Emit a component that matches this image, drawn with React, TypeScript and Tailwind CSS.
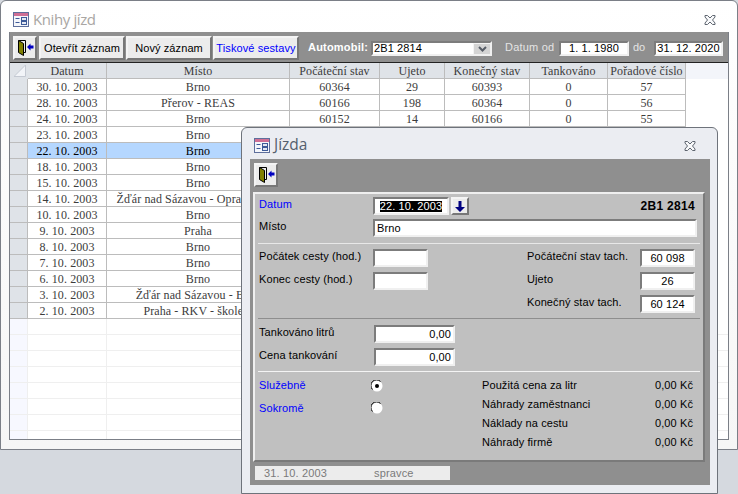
import React from "react";

const sans = "font-['Liberation_Sans',Arial,sans-serif]";
const serif = "font-['Liberation_Serif','Times_New_Roman',serif]";
const sunken = "border-2 border-t-[#7c7c7c] border-l-[#7c7c7c] border-r-[#f0f0f0] border-b-[#f0f0f0] bg-white";
const raised = "border-2 border-t-[#f4f4f4] border-l-[#f4f4f4] border-r-[#777777] border-b-[#777777] bg-[#ececec]";

const FormIcon = () => (
  <svg width="16" height="15" viewBox="0 0 16 15" className="shrink-0">
    <rect x="0.5" y="0.5" width="15" height="14" fill="#f4f6fb" stroke="#5e6f9c" />
    <rect x="1" y="1" width="14" height="3" fill="#cf6f95" />
    <rect x="2.5" y="6" width="4" height="1" fill="#3d5a98" />
    <rect x="2.5" y="10" width="4" height="1" fill="#3d5a98" />
    <rect x="8.5" y="5.5" width="5" height="3" fill="#e4e8f2" stroke="#3d5a98" strokeWidth="1" />
    <rect x="8.5" y="9.5" width="5" height="3" fill="#e4e8f2" stroke="#3d5a98" strokeWidth="1" />
  </svg>
);

const CloseIcon = () => (
  <svg width="12" height="10" viewBox="0 0 12 10">
    <path d="M1 .5h2.500L6 3l2.500-2.500H11v1.500L8.500 5 11 8v1.500H8.500L6 7 3.500 9.500H1V8l2.500-3L1 2z" fill="#f8f9fb" stroke="#5f6670" strokeWidth="1" />
  </svg>
);

const DoorIcon = () => (
  <svg width="20" height="20" viewBox="0 0 20 20">
    <path d="M3.500 2.500h7v12H8" fill="none" stroke="#000" />
    <path d="M3.500 2.500l5 3v12l-5-3z" fill="#808000" stroke="#000" />
    <path d="M12 9l3.500-3.500V7.500H18.500v3H15.500v2z" fill="#0000c0" />
  </svg>
);

const ExitButton = ({ cls }: { cls: string }) => (
  <div className={`${raised} w-[24px] h-[24px] flex items-center justify-center ${cls}`}>
    <DoorIcon />
  </div>
);

const ToolBtn = ({ label, blue }: { label: string; blue?: boolean }) => (
  <div className={`${raised} w-[86px] h-[24px] flex items-center justify-center text-[11px] tracking-[0.1px] whitespace-nowrap ${blue ? "text-[#0000ff]" : "text-black"}`}>
    {label}
  </div>
);

const widths = ["w-[79px]", "w-[183px]", "w-[90px]", "w-[65px]", "w-[85px]", "w-[78px]", "w-[78px]"];
const headers = ["Datum", "Místo", "Počáteční stav", "Ujeto", "Konečný stav", "Tankováno", "Pořadové číslo"];
const rows: string[][] = [
  ["30. 10. 2003", "Brno", "60364", "29", "60393", "0", "57"],
  ["28. 10. 2003", "Přerov - REAS", "60166", "198", "60364", "0", "56"],
  ["24. 10. 2003", "Brno", "60152", "14", "60166", "0", "55"],
  ["23. 10. 2003", "Brno", "60124", "28", "60152", "0", "54"],
  ["22. 10. 2003", "Brno", "60098", "26", "60124", "0", "53"],
  ["18. 10. 2003", "Brno", "", "", "", "", ""],
  ["15. 10. 2003", "Brno", "", "", "", "", ""],
  ["14. 10. 2003", "Žďár nad Sázavou - Oprava vozu", "", "", "", "", ""],
  ["10. 10. 2003", "Brno", "", "", "", "", ""],
  ["9. 10. 2003", "Praha", "", "", "", "", ""],
  ["8. 10. 2003", "Brno", "", "", "", "", ""],
  ["7. 10. 2003", "Brno", "", "", "", "", ""],
  ["6. 10. 2003", "Brno", "", "", "", "", ""],
  ["3. 10. 2003", "Žďár nad Sázavou - Brno", "", "", "", "", ""],
  ["2. 10. 2003", "Praha - RKV - školení", "", "", "", "", ""],
];

const Datasheet = () => (
  <div className={`${serif} text-[12px] tracking-[0.1px] text-[#3c3c3c] h-[377px] overflow-hidden bg-white`}>
    <div className="flex h-[16px] bg-[#f3f5fa]">
      <div className="w-[18px] bg-[#dfe3e8] border-r border-[#dfe3e8] relative">
        <svg width="12" height="12" viewBox="0 0 12 12" className="absolute left-[4px] top-[2px]">
          <path d="M0 11.500h11.500V0z" fill="#f2f4f8" stroke="#c4c9d2" strokeWidth="1" />
        </svg>
      </div>
      {headers.map((h, i) => (
        <div key={h} className={`${widths[i]} shrink-0 bg-[#dfe3e8] border-r border-b border-[#bcbcbc] flex items-center justify-center leading-none`}>
          {h}
        </div>
      ))}
    </div>
    {rows.map((r, n) => (
      <div key={n} className={`flex h-[16px] ${n === 4 ? "text-black" : ""}`}>
        <div className="w-[18px] shrink-0 bg-[#dfe3e8] border-r border-b border-[#bcbcbc]" />
        {r.map((c, i) => (
          <div
            key={i}
            className={`${widths[i]} shrink-0 border-r border-b border-[#bcbcbc] flex items-center justify-center whitespace-nowrap overflow-hidden leading-none pt-px ${n === 4 ? "bg-[#b5d7ff]" : ""}`}
          >
            {c}
          </div>
        ))}
      </div>
    ))}
    {Array.from({ length: 8 }).map((_, n) => (
      <div key={n} className="flex h-[16px]">
        <div className="w-[18px] shrink-0 bg-[#f7f8ff] border-r border-b border-[#efefef]" />
        {widths.map((w, i) => (
          <div key={i} className={`${w} shrink-0 border-r border-b border-[#efefef]`} />
        ))}
        <div className="flex-1 border-b border-[#efefef]" />
      </div>
    ))}
  </div>
);

const Field = ({ w, value, align }: { w: string; value?: string; align?: string }) => (
  <div className={`${sunken} ${w} h-[18px] flex items-center px-[2px] text-[11px] tracking-[0.1px] leading-none text-black ${align ?? ""}`}>
    {value}
  </div>
);

const Label = ({ children, blue, cls }: { children: React.ReactNode; blue?: boolean; cls?: string }) => (
  <div className={`text-[11px] tracking-[0.1px] leading-none whitespace-nowrap ${blue ? "text-[#0000ff]" : "text-black"} ${cls ?? ""}`}>{children}</div>
);

const Radio = ({ on }: { on?: boolean }) => (
  <svg width="12" height="12" viewBox="0 0 12 12">
    <circle cx="6" cy="6" r="5.500" fill="#fff" />
    <path d="M1.500 9.500A5.500 5.500 0 0 1 9.500 1.500" fill="none" stroke="#000" strokeWidth="1" />
    {on && <circle cx="6" cy="6" r="2" fill="#000" />}
  </svg>
);

const Money = ({ label, value }: { label: string; value: string }) => (
  <div className="flex h-[19px] items-center justify-between">
    <Label>{label}</Label>
    <Label>{value}</Label>
  </div>
);

const Dialog = () => (
  <div className="absolute left-[241px] top-[127px] w-[477px] h-[367px] rounded-t-[6px] border border-[#6e737b] bg-[#ebedf2] flex flex-col pl-[8px] pr-[7px]">
    <div className="h-[31px] flex items-center pl-[4px] pt-[3px] gap-[4px] relative shrink-0">
      <FormIcon />
      <span className="font-['Open_Sans',sans-serif] text-[15.5px] text-[#55606e]">Jízda</span>
      <div className="absolute right-[14px] top-[13px]"><CloseIcon /></div>
    </div>
    <div className="h-[326px] bg-[#8f8f8f] flex flex-col pt-[4px] pl-[4px] pr-[5px]">
      <ExitButton cls="" />
      <div className={`${sans} mt-[5px] -ml-[1px] h-[270px] bg-[#c0c0c0] border-2 border-t-[#efefef] border-l-[#efefef] border-r-[#7a7a7a] border-b-[#7a7a7a] flex flex-col pt-[3px]`}>
        <div className="flex h-[18px]">
          <Label blue cls="w-[118px] pl-[4px] pt-[2px] shrink-0">Datum</Label>
          <div className={`${sunken} w-[76px] h-[18px] flex items-center justify-center text-[11px] tracking-[0.1px] leading-none`}>
            <span className="bg-black text-white">22. 10. 2003</span>
          </div>
          <div className={`${raised} ml-[2px] w-[18px] h-[18px] flex items-center justify-center`}>
            <svg width="10" height="11" viewBox="0 0 10 11"><path d="M3.500 0h3v6H10L5 11 0 6h3.500z" fill="#000080" /></svg>
          </div>
          <div className="flex-1 text-right pr-[8px] pt-[3px] text-[12px] tracking-[0.3px] leading-none font-bold text-black">2B1 2814</div>
        </div>
        <div className="flex h-[18px] mt-[4px]">
          <Label cls="w-[118px] pl-[4px] pt-[2px] shrink-0">Místo</Label>
          <Field w="w-[324px]" value="Brno" />
        </div>
        <div className="h-px bg-[#e8e8e8] mt-[6px] mx-[3px]" />

        <div className="flex justify-between mt-[5px] h-[64px]">
          <div className="flex flex-col gap-[5px]">
            <div className="flex h-[18px]">
              <Label cls="w-[118px] pl-[4px] pt-[2px]">Počátek cesty (hod.)</Label>
              <Field w="w-[55px]" />
            </div>
            <div className="flex h-[18px]">
              <Label cls="w-[118px] pl-[4px] pt-[2px]">Konec cesty (hod.)</Label>
              <Field w="w-[55px]" />
            </div>
          </div>
          <div className="flex flex-col gap-[5px] pr-[8px]">
            {[["Počáteční stav tach.", "60 098"], ["Ujeto", "26"], ["Konečný stav tach.", "60 124"]].map(([l, v]) => (
              <div key={l} className="flex h-[18px]">
                <Label cls="w-[113px] pt-[2px]">{l}</Label>
                <Field w="w-[55px]" value={v} align="justify-center" />
              </div>
            ))}
          </div>
        </div>
        <div className="h-px bg-[#8e8e8e] mt-[5px] mx-[3px]" />

        <div className="flex flex-col gap-[5px] mt-[6px]">
          {[["Tankováno litrů", "0,00"], ["Cena tankování", "0,00"]].map(([l, v]) => (
            <div key={l} className="flex h-[18px]">
              <Label cls="w-[119px] pl-[4px] pt-[2px]">{l}</Label>
              <Field w="w-[81px]" value={v} align="justify-end" />
            </div>
          ))}
        </div>
        <div className="h-px bg-[#f4f4f4] mt-[5px] mx-[3px]" />

        <div className="flex mt-[8px]">
          <div className="w-[116px] pl-[4px] flex flex-col gap-[12px]">
            <Label blue>Služebně</Label>
            <Label blue>Sokromě</Label>
          </div>
          <div className="w-[111px] flex flex-col gap-[10px]">
            <Radio on />
            <Radio />
          </div>
          <div className="w-[211px] -mt-[4px] flex flex-col">
            <Money label="Použitá cena za litr" value="0,00 Kč" />
            <Money label="Náhrady zaměstnanci" value="0,00 Kč" />
            <Money label="Náklady na cestu" value="0,00 Kč" />
            <Money label="Náhrady firmě" value="0,00 Kč" />
          </div>
        </div>
      </div>
      <div className={`${sans} mt-[4px] h-[14px] w-[195px] ml-[1px] bg-[#ececec] flex items-center text-[11px] tracking-[0.15px] leading-none text-[#7a7a7a]`}>
        <span className="w-[119px] pl-[9px]">31. 10. 2003</span>
        <span>spravce</span>
      </div>
    </div>
  </div>
);

export default function App() {
  return (
    <div className="relative w-[738px] h-[494px] overflow-hidden bg-[#d5d9df]">
      <div className="w-[738px] h-[450px] rounded-t-[6px] border border-[#7b7f87] bg-gradient-to-b from-white to-[#f6f6f6] flex flex-col pl-[8px] pr-[8px]">
        <div className="h-[31px] flex items-center pl-[4px] pt-[5px] gap-[4px] relative shrink-0">
          <FormIcon />
          <span className="font-['Open_Sans',sans-serif] text-[15px] tracking-[-0.4px] text-[#a9a6a3]">Knihy jízd</span>
          <div className="absolute right-[13px] top-[14px]"><CloseIcon /></div>
        </div>
        <div className="flex flex-col border-x border-b border-[#7b7f87] h-[408px]">
          <div className={`${sans} h-[31px] bg-[#8f8f8f] border-b border-[#222222] flex items-center pl-[3px] shrink-0`}>
            <ExitButton cls="mt-[2px]" />
            <div className="flex ml-[2px] gap-px mt-[2px]">
              <ToolBtn label="Otevřít záznam" />
              <ToolBtn label="Nový záznam" />
              <ToolBtn label="Tiskové sestavy" blue />
            </div>
            <span className="ml-[9px] text-[11px] font-bold text-white tracking-[0.2px] w-[63px] whitespace-nowrap">Automobil:</span>
            <div className={`${sunken} w-[121px] h-[15px] mt-[3px] flex items-center pl-[1px] text-[11px] tracking-[0.1px] leading-none relative`}>
              2B1 2814
              <div className="absolute right-0 top-0 bottom-0 w-[17px] bg-[#d4d4d4] border-l border-t border-[#f4f4f4] flex items-center justify-center">
                <svg width="9" height="6" viewBox="0 0 9 6"><path d="M1 1l3.500 3.500L8 1" fill="none" stroke="#565c66" strokeWidth="2" /></svg>
              </div>
            </div>
            <span className="ml-[13px] w-[54px] text-[11px] tracking-[0.2px] text-[#e4e4e4] whitespace-nowrap">Datum od</span>
            <div className={`${sunken} w-[70px] h-[15px] mt-[3px] flex items-center justify-center text-[11px] tracking-[0.1px] leading-none whitespace-nowrap`}>1. 1. 1980</div>
            <span className="w-[25px] pl-[4px] text-[11px] text-[#e4e4e4]">do</span>
            <div className={`${sunken} w-[69px] h-[15px] mt-[3px] flex items-center justify-center text-[11px] tracking-[0.1px] leading-none whitespace-nowrap`}>31. 12. 2020</div>
          </div>
          <Datasheet />
        </div>
      </div>
      <Dialog />
    </div>
  );
}
